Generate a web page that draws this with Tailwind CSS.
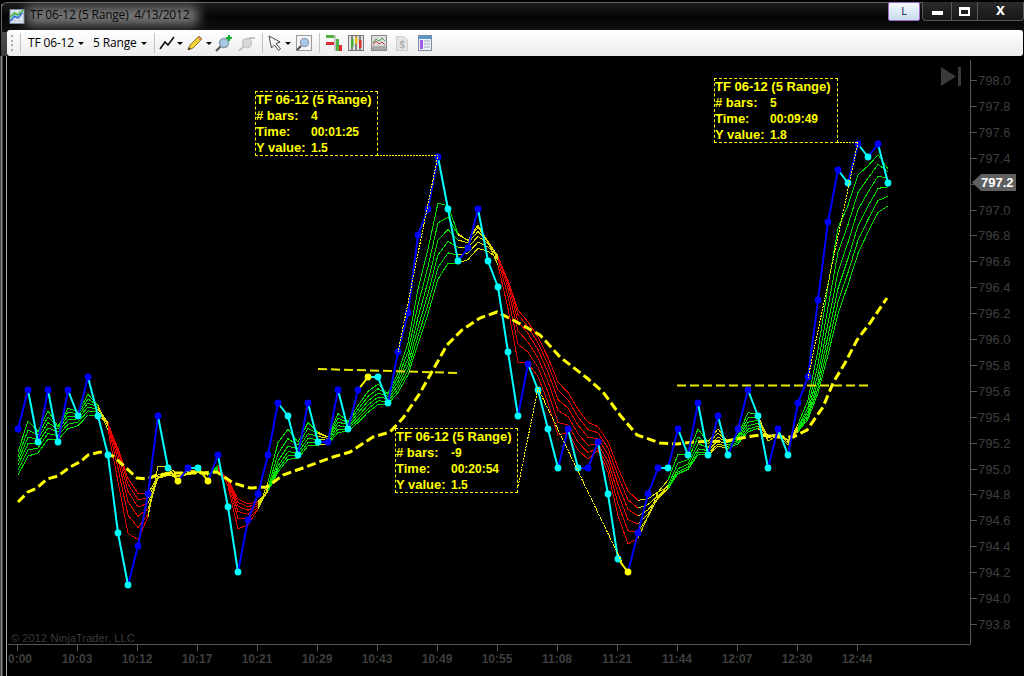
<!DOCTYPE html>
<html>
<head>
<meta charset="utf-8">
<script src="https://cdn.jsdelivr.net/npm/@tailwindcss/browser@4"></script>
</head>
<body class="bg-black">
<div class="relative w-[1024px] h-[676px] bg-black overflow-hidden flex flex-col font-['Liberation_Sans',sans-serif]">

  <!-- window frame, left of the toolbar -->
  <div class="absolute left-[1px] top-[4px] w-[6px] h-[52px] bg-gradient-to-b from-[#6a6a6a] to-[#3a3a3a]"></div>

  <!-- title bar -->
  <div class="relative h-[30px] shrink-0 flex items-start bg-gradient-to-b from-[#1c1c1c] via-[#060606] to-[#111111] border-t border-l border-[#666666] rounded-tl-[6px] ml-[1px] mt-[2px] -mb-[2px]">
    <div class="absolute left-[24px] top-[4px] w-[172px] h-[18px] bg-[#9a9a9a] blur-[6px] opacity-80"></div>
    <svg class="relative ml-[7px] mt-[5px]" width="16" height="16" viewBox="0 0 15 16">
      <rect x="0.5" y="1.5" width="14" height="14" fill="#dfe6ee" stroke="#7d8ea0"/>
      <path d="M1 5H14M1 9H14M1 13H14M5 2V15M10 2V15" stroke="#b8c4d0" stroke-width="0.7"/>
      <path d="M1 13L5 8L8 10L13 5" fill="none" stroke="#2b6bd8" stroke-width="1.6"/>
      <path d="M1 9L5 5L8 7L14 2" fill="none" stroke="#3cb43c" stroke-width="1.6"/>
    </svg>
    <span class="relative ml-[5px] mt-[4px] text-[12px] tracking-[-0.2px] leading-[16px] text-[#0a0a0a] whitespace-pre font-['Open_Sans',sans-serif]">TF 06-12 (5 Range)  4/13/2012</span>
    <div class="ml-auto -mt-px flex items-start">
      <div class="w-[32px] h-[19px] mr-[2px] flex items-center justify-center rounded-[2px] border border-[#a070c8] bg-gradient-to-b from-[#f4f8fc] to-[#c8dcec] text-[11px] text-[#101050] font-['Open_Sans',sans-serif]">L</div>
      <div class="flex h-[19px] border border-t-0 border-[#5a5a5a] rounded-b-[4px] bg-gradient-to-b from-[#2a2a2a] to-[#181818]">
        <div class="w-[29px] flex items-start justify-center border-r border-[#5a5a5a]"><div class="w-[11px] h-[4px] bg-white mt-[9px]"></div></div>
        <div class="w-[26px] flex items-start justify-center border-r border-[#5a5a5a]"><div class="w-[11px] h-[9px] border-[2px] border-t-[3px] border-white mt-[5px]"></div></div>
        <div class="w-[45px] flex items-start justify-center text-white font-bold text-[16px] leading-[16px]">x</div>
      </div>
    </div>
  </div>

  <!-- toolbar -->
  <div class="relative z-10 ml-[7px] mr-[1px] h-[26px] shrink-0 flex items-center rounded-[3px] bg-gradient-to-b from-[#ffffff] to-[#ececec] text-[12px] tracking-[-0.15px] text-[#000000] font-['Open_Sans',sans-serif]">
    <div class="ml-[4px] w-[3px] h-[16px] flex flex-col justify-between">
      <i class="block w-[2px] h-[2px] bg-[#aaaaaa]"></i><i class="block w-[2px] h-[2px] bg-[#aaaaaa]"></i><i class="block w-[2px] h-[2px] bg-[#aaaaaa]"></i><i class="block w-[2px] h-[2px] bg-[#aaaaaa]"></i>
    </div>
    <div class="ml-[6px] w-px h-[20px] bg-[#c4c4c4]"></div>
    <span class="ml-[7px] w-[50px] whitespace-nowrap">TF 06-12</span>
    <svg width="6" height="3"><path d="M0 0H6L3 3Z" fill="#000"/></svg>
    <span class="ml-[9px] w-[48px] whitespace-nowrap">5 Range</span>
    <svg width="6" height="3"><path d="M0 0H6L3 3Z" fill="#000"/></svg>
    <div class="ml-[7px] w-px h-[20px] bg-[#c4c4c4]"></div>
    <svg class="ml-[4px]" width="16" height="16" viewBox="0 0 16 16"><path d="M1 14L6 7L9 10L15 2" fill="none" stroke="#111" stroke-width="1.6"/></svg>
    <svg class="ml-[2px]" width="6" height="3"><path d="M0 0H6L3 3Z" fill="#000"/></svg>
    <svg class="ml-[4px]" width="16" height="16" viewBox="0 0 16 16"><path d="M1 15L3 10L12 1L15 4L6 13Z" fill="#f3d23c" stroke="#8a6a10" stroke-width="0.9"/><path d="M11 2L14 5" stroke="#e08a70" stroke-width="2"/><path d="M1 15L2 12L4 14Z" fill="#333"/></svg>
    <svg class="ml-[3px]" width="6" height="3"><path d="M0 0H6L3 3Z" fill="#000"/></svg>
    <svg class="ml-[3px]" width="18" height="18" viewBox="0 0 18 18"><path d="M1 17L6 12" stroke="#555" stroke-width="2"/><circle cx="9" cy="9" r="4.5" fill="#a8c8e8" stroke="#8a9aa8" stroke-width="1.4"/><path d="M14 1V7M11 4H17" stroke="#10b030" stroke-width="2.2"/></svg>
    <svg class="ml-[5px]" width="18" height="18" viewBox="0 0 18 18"><path d="M1 17L6 12" stroke="#c0c0c0" stroke-width="2"/><circle cx="9" cy="9" r="4.5" fill="#d8d8d8" stroke="#c4c4c4" stroke-width="1.4"/><path d="M11 4H17" stroke="#c0c0c0" stroke-width="2"/></svg>
    <div class="ml-[6px] w-px h-[20px] bg-[#c4c4c4]"></div>
    <svg class="ml-[5px]" width="15" height="16" viewBox="0 0 15 16"><path d="M1 1L12 7L8 8.5L12.5 14L10.5 15.5L6.5 10L3.5 13Z" fill="#fff" stroke="#444" stroke-width="1"/></svg>
    <svg class="ml-[2px]" width="6" height="3"><path d="M0 0H6L3 3Z" fill="#000"/></svg>
    <svg class="ml-[5px]" width="16" height="16" viewBox="0 0 16 16"><rect x="0.5" y="0.5" width="15" height="15" fill="#f4f4f4" stroke="#9a9a9a"/><path d="M1 15L5 11" stroke="#444" stroke-width="1.8"/><circle cx="8.5" cy="7.5" r="4" fill="#a8c8e8" stroke="#8a9aa8" stroke-width="1.2"/></svg>
    <div class="ml-[7px] w-px h-[20px] bg-[#c4c4c4]"></div>
    <svg class="ml-[5px]" width="17" height="18" viewBox="0 0 17 18"><rect x="1" y="1" width="8" height="3" fill="#50b040"/><rect x="1" y="8" width="8" height="3" fill="#d83030"/><path d="M10 1V17" stroke="#999" stroke-width="1"/><rect x="11" y="5" width="3" height="12" fill="#50b040"/><rect x="14" y="11" width="3" height="6" fill="#d83030"/></svg>
    <svg class="ml-[6px]" width="16" height="16" viewBox="0 0 16 16"><rect x="0.5" y="0.5" width="15" height="15" fill="#e4e4e4" stroke="#777"/><path d="M4 1V15M8 1V15M12 1V15" stroke="#222"/><rect x="3" y="4" width="2.5" height="8" fill="#40b030"/><rect x="7" y="2" width="2.5" height="7" fill="#e8c020"/><rect x="11" y="5" width="2.5" height="8" fill="#d83030"/></svg>
    <svg class="ml-[7px]" width="16" height="16" viewBox="0 0 16 16"><rect x="0.5" y="0.5" width="15" height="15" fill="#dcdcdc" stroke="#8a8a8a"/><rect x="1" y="11" width="14" height="4" fill="#a8a8a8"/><path d="M2 8L5 4L8 6L11 3L14 6" fill="none" stroke="#40a050"/><path d="M2 10L5 6L8 9L11 7L14 10" fill="none" stroke="#d84040"/></svg>
    <svg class="ml-[9px]" width="12" height="15" viewBox="0 0 12 15"><path d="M0.5 0.5H8L11.5 4V14.5H0.5Z" fill="#e4e4e4" stroke="#cccccc"/><text x="6" y="12" text-anchor="middle" font-size="10" font-weight="700" fill="#b0b0b0">$</text></svg>
    <svg class="ml-[10px]" width="14" height="16" viewBox="0 0 14 16"><rect x="0.5" y="0.5" width="13" height="15" fill="#eef2f8" stroke="#7a8ca4"/><rect x="1" y="1" width="12" height="3" fill="#5a96c8"/><rect x="2" y="5" width="3" height="9" fill="#a060e0"/><path d="M6 6H12M6 9H12M6 12H12" stroke="#9aa8b8"/></svg>
  </div>

  <!-- chart -->
  <div class="relative flex-1">
    <svg id="chart" class="absolute left-0 top-[-56px]" width="1024" height="676" viewBox="0 0 1024 676">
      <path d="M1.5 56V676" stroke="#8a8a8a" stroke-width="2"/>
      <path d="M6.5 56V676" stroke="#a8a8a8" stroke-width="1"/>
      <path d="M8 644.5H970.5V60" fill="none" stroke="#555555" stroke-width="1"/>
      <g id="axes" fill="#3e3e3e"></g>
      <path d="M941 67L956 76.5L941 86Z" fill="#3a3a3a"/>
      <rect x="958" y="67" width="3" height="19" fill="#3a3a3a"/>
      <text x="11" y="642" font-size="11" fill="#3c3c3c" letter-spacing="0.1">© 2012 NinjaTrader, LLC</text>
      <g id="ribbon" shape-rendering="crispEdges" stroke-width="1"></g>
      <polyline fill="none" stroke="#ffff00" stroke-width="3" stroke-dasharray="9 4" points="18,502 28,492 37,488 47,479 58,476 70,467 80,462 88,455 100,452 113,456 125,467 137,478 147,479 157,475 173,473 200,473 217,472 233,483 250,488 267,487 283,475 300,469 333,457 350,452 373,437 390,432 403,418 420,393 447,345 462,330 480,318 497,312 513,320 540,335 560,357 587,378 603,392 620,415 637,435 660,443 677,444 693,442 727,441 747,437 760,435 777,437 793,437 807,430 823,407 833,383 845,363 857,340 870,323 887,298"/>
      <path d="M318 369L458 373" stroke="#e8e800" stroke-width="2" stroke-dasharray="9 4"/>
      <path d="M677 385.5H868" stroke="#e8e800" stroke-width="2" stroke-dasharray="9 4"/>
      <g id="price"></g>
      <g fill="none" stroke="#ffff00" stroke-width="1" stroke-dasharray="2 1" shape-rendering="crispEdges">
        <polyline points="377,155 438,155 398,352"/>
        <polyline points="517,492 538,388 628,575"/>
        <polyline points="837,142 858,142 808,378"/>
      </g>
      <path d="M972 182.5L981 174H1016V191H981Z" fill="#606060"/>
      <text x="981" y="187" font-size="13" font-weight="700" fill="#ffffff">797.2</text>
    </svg>

    <div class="absolute left-[255px] top-[35px] w-[123px] h-[65px] border border-dashed border-[#ffff00] bg-black text-[#ffff00] font-bold text-[13px] leading-[16px]">
      <div class="whitespace-nowrap">TF 06-12 (5 Range)</div>
      <div class="flex"><span class="w-[55px]"># bars:</span><span class="text-[12px]">4</span></div>
      <div class="flex"><span class="w-[55px]">Time:</span><span class="text-[12px]">00:01:25</span></div>
      <div class="flex"><span class="w-[55px]">Y value:</span><span class="text-[12px]">1.5</span></div>
    </div>
    <div class="absolute left-[395px] top-[372px] w-[123px] h-[65px] border border-dashed border-[#ffff00] bg-black text-[#ffff00] font-bold text-[13px] leading-[16px]">
      <div class="whitespace-nowrap">TF 06-12 (5 Range)</div>
      <div class="flex"><span class="w-[55px]"># bars:</span><span class="text-[12px]">-9</span></div>
      <div class="flex"><span class="w-[55px]">Time:</span><span class="text-[12px]">00:20:54</span></div>
      <div class="flex"><span class="w-[55px]">Y value:</span><span class="text-[12px]">1.5</span></div>
    </div>
    <div class="absolute left-[714px] top-[22px] w-[124px] h-[65px] border border-dashed border-[#ffff00] bg-black text-[#ffff00] font-bold text-[13px] leading-[16px]">
      <div class="whitespace-nowrap">TF 06-12 (5 Range)</div>
      <div class="flex"><span class="w-[55px]"># bars:</span><span class="text-[12px]">5</span></div>
      <div class="flex"><span class="w-[55px]">Time:</span><span class="text-[12px]">00:09:49</span></div>
      <div class="flex"><span class="w-[55px]">Y value:</span><span class="text-[12px]">1.8</span></div>
    </div>
  </div>
</div>

<script>
(function () {
  var B = '#0000ff', C = '#00ffff', Y = '#ffff00';
  var d = [429,B,390,B,442,C,390,B,442,C,390,B,416,C,377,B,416,C,455,C,533,C,585,C,546,B,494,B,416,B,468,C,481,Y,468,B,468,C,481,Y,455,B,507,C,572,C,520,B,494,B,455,B,403,B,416,C,455,C,403,B,442,C,442,B,390,B,429,C,390,B,377,Y,377,C,403,C,352,B,313,B,235,B,209,B,157,B,209,C,261,C,248,B,209,B,261,C,287,C,352,C,416,C,364,B,390,C,429,C,468,C,429,B,468,C,468,B,442,B,494,C,559,C,572,Y,533,B,494,B,468,B,468,C,429,B,455,C,403,B,455,C,416,B,455,C,429,B,390,B,416,C,468,C,429,B,455,C,403,B,377,B,300,B,222,B,170,B,183,C,144,B,157,C,144,B,183,C];
  var n = d.length / 2, pts = [];
  for (var i = 0; i < n; i++) pts.push({ x: 18 + 10 * i, y: d[2 * i], c: d[2 * i + 1] });

  function band(x) {
    var G = '#00e000', R = '#e60000', L = '#dcdc00';
    var r = [[98,G],[108,L],[148,R],[208,L],[218,G],[258,R],[268,L],[318,G],[328,L],[458,G],[498,L],[638,R],[668,L],[708,G],[728,L],[758,G],[798,L],[9999,G]];
    for (var i = 0; i < r.length; i++) if (x <= r[i][0]) return r[i][1];
  }
  var periods = [3, 4, 5, 6, 7, 8], seed = [452, 457, 461, 465, 470, 475], rib = '';
  periods.forEach(function (p, k) {
    var a = 2 / (p + 1), v = seed[k];
    for (var i = 1; i < n; i++) {
      var nv = v + a * (pts[i].y - v);
      rib += '<line x1="' + pts[i - 1].x + '" y1="' + v.toFixed(1) + '" x2="' + pts[i].x + '" y2="' + nv.toFixed(1) + '" stroke="' + band(pts[i].x) + '"/>';
      v = nv;
    }
  });
  document.getElementById('ribbon').innerHTML = rib;

  var pr = '';
  for (var i = 1; i < n; i++) pr += '<line x1="' + pts[i - 1].x + '" y1="' + pts[i - 1].y + '" x2="' + pts[i].x + '" y2="' + pts[i].y + '" stroke="' + pts[i].c + '" stroke-width="2"/>';
  pts.forEach(function (p) { pr += '<circle cx="' + p.x + '" cy="' + p.y + '" r="3.4" fill="' + p.c + '"/>'; });
  document.getElementById('price').innerHTML = pr;

  var ax = '', labels = ['0:00','10:03','10:12','10:17','10:21','10:29','10:43','10:49','10:55','11:08','11:21','11:44','12:07','12:30','12:44'];
  labels.forEach(function (t, i) {
    var x = 17 + 60 * i;
    ax += '<rect x="' + x + '" y="645" width="1" height="6" fill="#555"/>';
    ax += '<text x="' + (i ? x : 8) + '" y="663" font-size="12" font-weight="700"' + (i ? ' text-anchor="middle"' : '') + '>' + t + '</text>';
  });
  for (var j = 0; j <= 21; j++) {
    var y = Math.round(80 + j * 25.9);
    ax += '<rect x="971" y="' + y + '" width="6" height="1" fill="#555"/>';
    ax += (y > 170 && y < 195) ? '' : '<text x="978" y="' + (y + 5) + '" font-size="13">' + (798 - j * 0.2).toFixed(1) + '</text>';
  }
  document.getElementById('axes').innerHTML = ax;
})();
</script>
</body>
</html>
